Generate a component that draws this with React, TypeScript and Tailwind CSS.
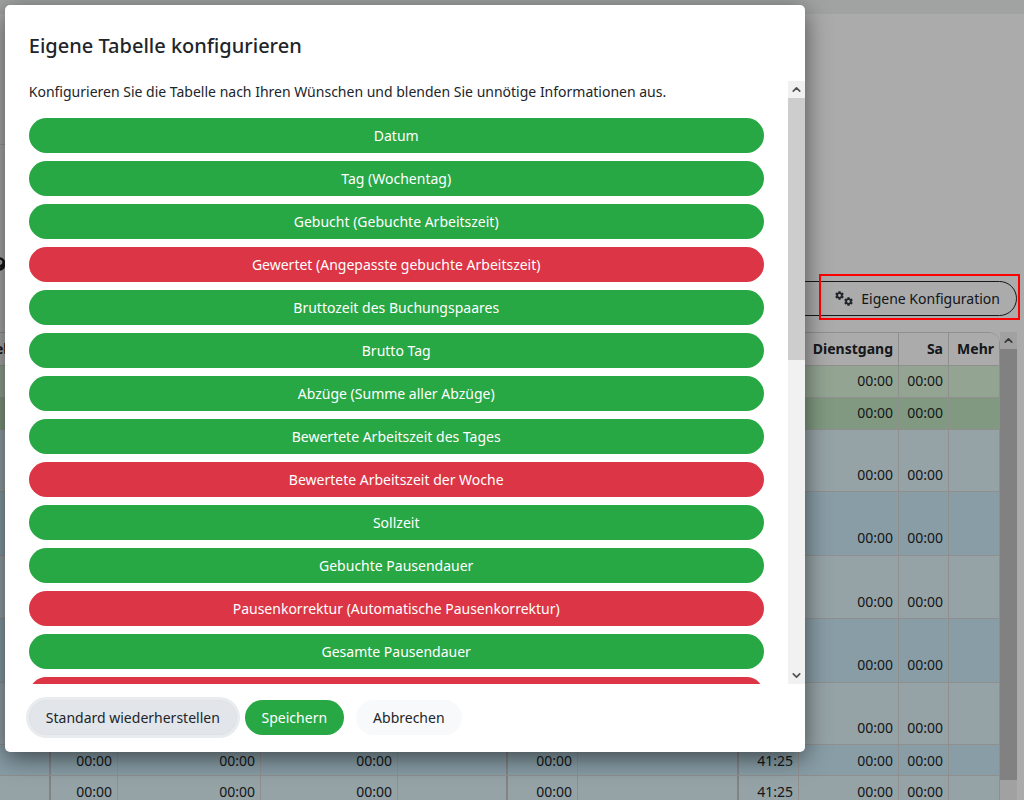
import { ChevronUp, ChevronDown } from "lucide-react"
import { FaCog, FaQuestionCircle } from "react-icons/fa"

const fields = [
  { label: "Datum", on: true },
  { label: "Tag (Wochentag)", on: true },
  { label: "Gebucht (Gebuchte Arbeitszeit)", on: true },
  { label: "Gewertet (Angepasste gebuchte Arbeitszeit)", on: false },
  { label: "Bruttozeit des Buchungspaares", on: true },
  { label: "Brutto Tag", on: true },
  { label: "Abzüge (Summe aller Abzüge)", on: true },
  { label: "Bewertete Arbeitszeit des Tages", on: true },
  { label: "Bewertete Arbeitszeit der Woche", on: false },
  { label: "Sollzeit", on: true },
  { label: "Gebuchte Pausendauer", on: true },
  { label: "Pausenkorrektur (Automatische Pausenkorrektur)", on: false },
  { label: "Gesamte Pausendauer", on: true },
  { label: "Überstunden", on: false },
]

const rows = [
  { h: "h-8", bg: "bg-[#dcf5dc]", pb: "pb-1.5" },
  { h: "h-8", bg: "bg-[#bfe5bf]", pb: "pb-1.5" },
  { h: "h-[62px]", bg: "bg-[#dff2f8]", pb: "pb-1.5" },
  { h: "h-[64px]", bg: "bg-[#cbebf8]", pb: "pb-[7px]" },
  { h: "h-[63px]", bg: "bg-[#dff2f8]", pb: "pb-1.5" },
  { h: "h-[64px]", bg: "bg-[#cbebf8]", pb: "pb-[7px]" },
  { h: "h-[62px]", bg: "bg-[#dff2f8]", pb: "pb-1.5" },
  { h: "h-[31px]", bg: "bg-[#cbebf8]", pb: "pb-1" },
  { h: "h-[31px]", bg: "bg-[#dff2f8]", pb: "pb-1" },
]

const cols = [
  { w: "w-[51px]", line: "border-r-2 border-[#c4c4c4]", head: "", value: "" },
  { w: "w-[67px]", line: "border-r border-[#d5d5d5]", head: "", value: "00:00" },
  { w: "w-[143px]", line: "border-r border-[#d5d5d5]", head: "", value: "00:00" },
  { w: "w-[137px]", line: "border-r border-[#d5d5d5]", head: "", value: "00:00" },
  { w: "w-[110px]", line: "border-r-2 border-[#c4c4c4]", head: "", value: "" },
  { w: "w-[70px]", line: "border-r border-[#d5d5d5]", head: "", value: "00:00" },
  { w: "w-[161px]", line: "border-r-2 border-[#c4c4c4]", head: "", value: "" },
  { w: "w-[60px]", line: "border-r border-[#d5d5d5]", head: "", value: "41:25" },
  { w: "w-[100px]", line: "border-r border-[#d5d5d5]", head: "Dienstgang", value: "00:00" },
  { w: "w-[50px]", line: "border-r border-[#d5d5d5]", head: "Sa", value: "00:00" },
  { w: "w-[51px]", line: "border-r border-[#d5d5d5]", head: "Mehr", value: "" },
]

function TimeTable() {
  return (
    <div className="flex">
      <div className="w-[1000px] shrink-0 overflow-hidden rounded-tr-xl border-t border-[#d5d5d5]">
        <div className="flex h-8 bg-white text-sm font-bold text-[#212529]">
          {cols.map((c, i) => (
            <div key={i} className={`${c.w} ${c.line} shrink-0 pr-[5px] text-right leading-8`}>
              {i === 0 ? <span className="-ml-[5px] block text-left">el</span> : c.head}
            </div>
          ))}
        </div>
        {rows.map((r, i) => (
          <div key={i} className={`flex ${r.h} ${r.bg} border-t border-[#d5d5d5] text-sm text-[#212529]`}>
            {cols.map((c, j) => (
              <div key={j} className={`${c.w} ${c.line} ${r.pb} flex shrink-0 items-end justify-end pr-[5px]`}>
                {c.value}
              </div>
            ))}
          </div>
        ))}
      </div>
      <div className="flex h-[468px] w-[17px] shrink-0 flex-col bg-[#f1f1f1]">
        <div className="flex h-[17px] items-center justify-center">
          <ChevronUp size={13} strokeWidth={3} className="text-[#505050]" />
        </div>
        <div className="h-[431px] bg-[#c1c1c1]" />
      </div>
    </div>
  )
}

export default function App() {
  return (
    <div className="relative h-[800px] w-[1024px] overflow-hidden bg-white font-['Noto_Sans',sans-serif]">
      <div className="h-[14px] bg-[#f0f3f3]" />
      <div className="h-[131px] w-[400px] border-b border-[#dee2e6]" />
      <div className="h-[136px] pt-[112px]">
        <FaQuestionCircle size={14} className="-ml-[8px] text-[#212529]" />
      </div>
      <div className="flex justify-end pr-[7px]">
        <div className="flex h-[35px] w-[300px] items-center justify-end gap-2 rounded-r-[18px] border border-[#212529] pr-4 text-sm text-[#212529]">
          <span className="flex h-[15px] w-[18px] justify-between text-[#343a40]">
            <FaCog size={9} className="self-start" />
            <FaCog size={9} className="self-end" />
          </span>
          Eigene Konfiguration
        </div>
      </div>
      <div className="h-[16px]" />
      <TimeTable />

      <div className="absolute inset-0 bg-black/33" />
      <div className="absolute left-[819px] top-[274px] h-[46px] w-[201px] border-2 border-[#f00]" />

      <div className="absolute left-[4.8px] top-[5px] flex h-[747px] w-[800px] flex-col rounded-[5px] bg-white shadow-[0_6px_24px_rgba(0,0,0,0.55)]">
        <h2 className="px-6 pt-[25px] text-xl leading-[32px] font-medium text-[#212529]">Eigene Tabelle konfigurieren</h2>
        <div className="mt-[19px] flex h-[603px]">
          <div className="flex-1 overflow-hidden pl-6 pr-[24.2px]">
            <p className="text-sm leading-[21px] text-[#212529]">
              Konfigurieren Sie die Tabelle nach Ihren Wünschen und blenden Sie unnötige Informationen aus.
            </p>
            <div className="mt-[16px] flex flex-col gap-2">
              {fields.map((f) => (
                <div
                  key={f.label}
                  className={`flex h-[35px] shrink-0 items-center justify-center rounded-full text-sm text-white ${f.on ? "bg-[#28a745]" : "bg-[#dc3545]"}`}
                >
                  {f.label}
                </div>
              ))}
            </div>
          </div>
          <div className="flex w-[17px] shrink-0 flex-col bg-[#f1f1f1]">
            <div className="flex h-[17px] items-center justify-center">
              <ChevronUp size={13} strokeWidth={3} className="text-[#505050]" />
            </div>
            <div className="h-[262px] bg-[#cdcdcd]" />
            <div className="flex-1" />
            <div className="flex h-[17px] items-center justify-center">
              <ChevronDown size={13} strokeWidth={3} className="text-[#505050]" />
            </div>
          </div>
        </div>
        <div className="flex items-center gap-2 px-6 pt-4 text-sm">
          <button className="h-[35px] rounded-full border border-[#dee2e6] bg-[#e2e6ea] px-4 text-[#212529] ring-[3px] ring-[#e9ecef]">
            Standard wiederherstellen
          </button>
          <button className="h-[35px] w-[99px] rounded-full bg-[#28a745] text-white">Speichern</button>
          <button className="ml-1 h-[35px] w-[106px] rounded-full bg-[#f8f9fa] text-[#212529]">Abbrechen</button>
        </div>
      </div>
    </div>
  )
}
